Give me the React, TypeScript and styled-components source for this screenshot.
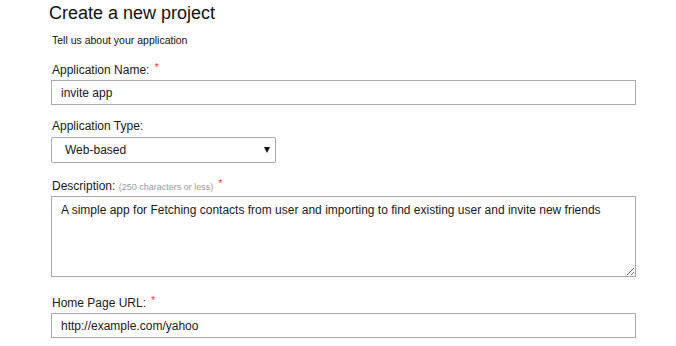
import React from "react";
import styled, { createGlobalStyle } from "styled-components";

const GlobalStyle = createGlobalStyle`
  html, body {
    margin: 0;
    padding: 0;
    background: #ffffff;
  }
  body {
    font-family: "Liberation Sans", Arial, sans-serif;
    color: #1a1a1a;
  }
`;

const Page = styled.div`
  width: 676px;
  height: 346px;
  overflow: hidden;
  padding: 2px 0 0 49px;
  box-sizing: border-box;
`;

const Title = styled.h1`
  margin: 0;
  font-size: 18px;
  line-height: 22px;
  font-weight: 400;
  color: #111111;
`;

const Intro = styled.p`
  margin: 10px 0 0 3px;
  font-size: 10.5px;
  line-height: 13px;
  color: #111111;
`;

const Field = styled.div<{ $gap: number }>`
  margin: ${({ $gap }) => $gap}px 0 0 2px;
  display: flex;
  flex-direction: column;
  align-items: flex-start;
`;

const Label = styled.label<{ $space: number }>`
  display: block;
  height: 14px;
  margin: 0 0 ${({ $space }) => $space}px 1px;
  font-size: 12px;
  line-height: 14px;
  color: #1a1a1a;
`;

const Hint = styled.span`
  font-size: 9px;
  line-height: 0;
  color: #9a9a9a;
`;

const Required = styled.span`
  position: relative;
  top: -3px;
  color: #e8413c;
  font-size: 11px;
  line-height: 0;
  margin-left: 5px;
`;

const TextInput = styled.input`
  box-sizing: border-box;
  width: 585px;
  height: 25px;
  margin: 0;
  padding: 0 9px;
  border: 1px solid #a9a9a9;
  border-radius: 0;
  font-family: "Liberation Sans", Arial, sans-serif;
  font-size: 12px;
  color: #1a1a1a;
  outline: none;
  background: #ffffff;
`;

const SelectWrap = styled.div`
  position: relative;
  width: 225px;
  height: 26px;
`;

const Select = styled.select`
  box-sizing: border-box;
  appearance: none;
  width: 100%;
  height: 26px;
  margin: 0;
  padding: 0 20px 0 13px;
  border: 1px solid #a9a9a9;
  border-radius: 2px;
  background: #ffffff;
  font-family: "Liberation Sans", Arial, sans-serif;
  font-size: 12px;
  color: #1a1a1a;
  outline: none;
`;

const Caret = styled.span`
  position: absolute;
  right: 6px;
  top: 10px;
  width: 0;
  height: 0;
  border-left: 3px solid transparent;
  border-right: 3px solid transparent;
  border-top: 6px solid #111111;
  pointer-events: none;
`;

const TextArea = styled.textarea`
  box-sizing: border-box;
  width: 585px;
  height: 81px;
  margin: 0;
  padding: 6px 9px;
  border: 1px solid #a9a9a9;
  border-radius: 0;
  font-family: "Liberation Sans", Arial, sans-serif;
  font-size: 12px;
  line-height: 14px;
  color: #1a1a1a;
  outline: none;
  display: block;
`;

export default function App() {
  return (
    <>
      <GlobalStyle />
      <Page>
        <Title>Create a new project</Title>
        <Intro>Tell us about your application</Intro>

        <Field $gap={16}>
          <Label $space={3}>
            Application Name:<Required>*</Required>
          </Label>
          <TextInput defaultValue="invite app" />
        </Field>

        <Field $gap={14}>
          <Label $space={4}>Application Type:</Label>
          <SelectWrap>
            <Select defaultValue="web">
              <option value="web">Web-based</option>
              <option value="desktop">Desktop</option>
              <option value="mobile">Mobile</option>
            </Select>
            <Caret />
          </SelectWrap>
        </Field>

        <Field $gap={16}>
          <Label $space={3}>
            Description: <Hint>(250 characters or less)</Hint>
            <Required>*</Required>
          </Label>
          <TextArea defaultValue="A simple app for Fetching contacts from user and importing to find existing user and invite new friends" />
        </Field>

        <Field $gap={19}>
          <Label $space={3}>
            Home Page URL:<Required>*</Required>
          </Label>
          <TextInput defaultValue="http://example.com/yahoo" />
        </Field>
      </Page>
    </>
  );
}
